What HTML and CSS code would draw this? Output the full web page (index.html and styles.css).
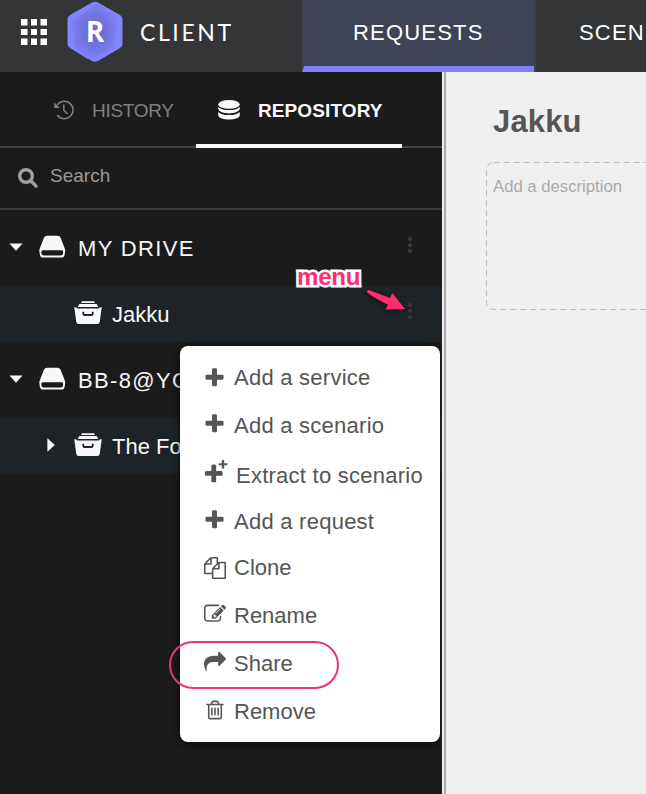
FILE: index.html
```html
<!DOCTYPE html>
<html lang="en">
<head>
<meta charset="utf-8">
<title>Client</title>
<link rel="stylesheet" href="styles.css">
</head>
<body>
<svg class="defs" aria-hidden="true">
  <symbol id="plus" viewBox="0 0 1792 1792"><path d="M1600 736v192q0 40-28 68t-68 28h-416v416q0 40-28 68t-68 28h-192q-40 0-68-28t-28-68v-416h-416q-40 0-68-28t-28-68v-192q0-40 28-68t68-28h416v-416q0-40 28-68t68-28h192q40 0 68 28t28 68v416h416q40 0 68 28t28 68z"/></symbol>
  <symbol id="drive" viewBox="0 0 28 24"><path d="M8.500.3h10.500q2.600 0 3.500 2.400l4.200 10.800q.5 1.200.5 2.500l-.6 4q-.5 3-3.600 3h-18.500q-3.100 0-3.600-3l-.6-4q0-1.300.5-2.500l4.200-10.800q.9-2.400 3.500-2.400z"/><path class="cut" d="M4 15.300h19.500q1.500 0 1.500 1.500v1.200q0 2.800-2.500 2.800h-17.500q-2.500 0-2.500-2.800v-1.200q0-1.500 1.500-1.500z"/></symbol>
  <symbol id="box" viewBox="0 0 28 24"><path d="M8.200.3h11.600l1.300 1.800h-14.200zM5.300 3h17.400l1.500 3h-20.400zM.3 6.200h1.500l1.600 1.200h21.200l1.600-1.200h1.500l-2 14.800q-.3 2-2.300 2h-18.800q-2 0-2.300-2z"/><path class="groove" d="M9.300 10.700v2q0 1.300 1.300 1.300h6.800q1.300 0 1.300-1.300v-2"/></symbol>
</svg>
<header class="topbar">
  <div class="brand">
    <svg class="apps" viewBox="0 0 26 26"><path d="M0 0h6.500v6.500H0zM10 0h6v6.500h-6zM19.500 0H26v6.500h-6.500zM0 10h6.500v6H0zM10 10h6v6h-6zM19.500 10H26v6h-6.500zM0 19.500h6.500V26H0zM10 19.500h6V26h-6zM19.500 19.500H26V26h-6.500z"/></svg>
    <div class="logo">
      <svg viewBox="0 0 56 62">
        <defs><radialGradient id="core"><stop offset="0" stop-color="#6668c8"/><stop offset=".55" stop-color="#7073dc"/><stop offset="1" stop-color="#7e80f8"/></radialGradient></defs>
        <path fill="#8285ff" d="M25 1.500Q28 0 31 1.500L53 14Q55.500 15.500 55.500 18V43Q55.500 45.500 53 47L31 60Q28 61.500 25 60L3 47Q.5 45.500 .5 43V18Q.5 15.500 3 14Z"/>
        <path fill="url(#core)" d="M29 3.500Q31 2 33 3.500L49 16Q51 18 50.500 20L47 45Q46.500 48 44 49.500L24 57.500Q21 58.500 19 57L10 51Q7.500 49.500 7.500 46.500L4.500 25Q4 21 7 18.500Z"/>
      </svg>
      <span class="logo-letter">R</span>
    </div>
    <span class="brand-name">CLIENT</span>
  </div>
  <nav class="topnav"><a class="top-tab active">REQUESTS</a><a class="top-tab">SCEN</a></nav>
</header>
<div class="workspace">
  <aside class="sidebar">
    <div class="side-tabs">
      <div class="side-tab history">
        <svg viewBox="0 0 20 20" width="20" height="20"><path class="line" d="M3.300 4.900A8.700 8.700 0 1 1 3.200 15M9.800 4.500V10.200L13.700 14"/><path class="solid" d="M.2 2.400V8.100H6z"/></svg>
        <span>HISTORY</span>
      </div>
      <div class="side-tab repository">
        <svg viewBox="0 0 22 20" width="22" height="20"><ellipse cx="11" cy="4.400" rx="10.800" ry="4.300"/><path d="M.2 7Q3 10.100 11 10.100T21.800 7V8.800C20.500 15 1.500 15 .2 8.800zM.2 12Q3 15.100 11 15.100T21.800 12V15.200C20.500 21 1.500 21 .2 15.200z"/></svg>
        <span>REPOSITORY</span>
      </div>
    </div>
    <div class="search">
      <svg viewBox="0 0 20 20" width="20" height="20"><circle cx="8" cy="8" r="6.300"/><path d="M13 13l5 5"/></svg>
      <span>Search</span>
    </div>
    <div class="row group">
      <svg class="caret" viewBox="0 0 14 8"><path d="M.4.500h13.200L7 7.700z"/></svg>
      <svg class="glyph"><use href="#drive"/></svg>
      <span class="label">MY DRIVE</span>
      <svg class="dots" viewBox="0 0 4 16"><circle cx="2" cy="2" r="2"/><circle cx="2" cy="8" r="2"/><circle cx="2" cy="14" r="2"/></svg>
    </div>
    <div class="row item">
      <svg class="glyph"><use href="#box"/></svg>
      <span class="label">Jakku</span>
      <span class="dots-button"><svg class="dots" viewBox="0 0 4 16"><circle cx="2" cy="2" r="2"/><circle cx="2" cy="8" r="2"/><circle cx="2" cy="14" r="2"/></svg></span>
    </div>
    <div class="row group">
      <svg class="caret" viewBox="0 0 14 8"><path d="M.4.500h13.200L7 7.700z"/></svg>
      <svg class="glyph"><use href="#drive"/></svg>
      <span class="label">BB-8@YO</span>
    </div>
    <div class="row item nested">
      <svg class="caret-right" viewBox="0 0 8 14"><path d="M.4.300L7.800 7 .4 13.700z"/></svg>
      <svg class="glyph"><use href="#box"/></svg>
      <span class="label">The Fo</span>
    </div>
  </aside>
  <main class="content">
    <h1>Jakku</h1>
    <div class="description">
      <svg class="dashes" width="300" height="148"><rect x=".5" y=".5" width="298" height="147" rx="7"/></svg>
      <span>Add a description</span>
    </div>
  </main>
</div>
<ul class="menu">
  <li><svg class="icon" viewBox="0 0 24 24"><use href="#plus" x="0" y=".500" width="23" height="23"/></svg><span>Add a service</span></li>
  <li><svg class="icon raised" viewBox="0 0 24 24"><use href="#plus" x="0" y=".500" width="23" height="23"/></svg><span>Add a scenario</span></li>
  <li class="extract"><svg class="icon raised wide" viewBox="0 0 26 24"><use href="#plus" x="-.500" y="1" width="22.500" height="22.500"/><path d="M19.300-2h1.400q.5 0 .5.500v2.700h2.700q.5 0 .5.500v1.100q0 .5-.5.5h-2.700v2.700q0 .5-.5.500h-1.400q-.5 0-.5-.5v-2.700h-2.700q-.5 0-.5-.5v-1.100q0-.5.500-.5h2.700v-2.700q0-.5.500-.5z"/></svg><span>Extract to scenario</span></li>
  <li><svg class="icon raised" viewBox="0 0 24 24"><use href="#plus" x="0" y=".500" width="23" height="23"/></svg><span>Add a request</span></li>
  <li class="clone short"><svg class="icon" viewBox="-80 -80 1952 1952"><path d="M1696 384q40 0 68 28t28 68v1216q0 40-28 68t-68 28h-960q-40 0-68-28t-28-68v-288h-544q-40 0-68-28t-28-68v-672q0-40 20-88t48-76l408-408q28-28 76-48t88-20h416q40 0 68 28t28 68v328q68-40 128-40h416zm-544 213l-299 299h299v-299zm-640-384l-299 299h299v-299zm196 647l316-316v-416h-384v416q0 40-28 68t-68 28h-416v640h512v-256q0-40 20-88t48-76zm956 804v-1152h-384v416q0 40-28 68t-68 28h-416v640h896z"/></svg><span>Clone</span></li>
  <li class="short"><svg class="icon raised" viewBox="-80 -80 1952 1952"><path d="M888 1184l116-116-152-152-116 116v56h96v96h56zm440-720q-16-16-33 1l-350 350q-17 17-1 33t33-1l350-350q17-17 1-33zm80 594v190q0 119-84.500 203.500t-203.500 84.500h-832q-119 0-203.500-84.500t-84.500-203.500v-832q0-119 84.500-203.500t203.500-84.500h832q63 0 117 25 15 7 18 23 3 17-9 29l-49 49q-14 14-32 8-23-6-45-6h-832q-66 0-113 47t-47 113v832q0 66 47 113t113 47h832q66 0 113-47t47-113v-126q0-13 9-22l64-64q15-15 35-7t20 29zm-96-738l288 288-672 672h-288v-288zm444 132l-92 92-288-288 92-92q28-28 68-28t68 28l152 152q28 28 28 68t-28 68z"/></svg><span>Rename</span></li>
  <li class="short"><svg class="icon raised" viewBox="-80 -80 1952 1952"><path d="M1792 640q0 26-19 45l-512 512q-19 19-45 19t-45-19-19-45v-256h-224q-98 0-175.500 6t-154 21.500-133 42.500-105.500 69.500-80 101-48.500 138.500-17.500 181q0 55 5 123 0 6 2.500 23.500t2.500 26.500q0 15-8.500 25t-23.500 10q-16 0-28-17-7-9-13-22t-13.500-30-10.500-24q-127-285-127-451 0-199 53-333 162-403 875-403h224v-256q0-26 19-45t45-19 45 19l512 512q19 19 19 45z"/></svg><span>Share</span></li>
  <li class="short"><svg class="icon raised" viewBox="-80 -80 1952 1952"><path d="M704 736v576q0 14-9 23t-23 9h-64q-14 0-23-9t-9-23v-576q0-14 9-23t23-9h64q14 0 23 9t9 23zm256 0v576q0 14-9 23t-23 9h-64q-14 0-23-9t-9-23v-576q0-14 9-23t23-9h64q14 0 23 9t9 23zm256 0v576q0 14-9 23t-23 9h-64q-14 0-23-9t-9-23v-576q0-14 9-23t23-9h64q14 0 23 9t9 23zm128 724v-948h-896v948q0 22 7 40.500t14.500 27 10.500 8.500h832q3 0 10.500-8.500t14.500-27 7-40.500zm-672-1076h448l-48-117q-7-9-17-11h-317q-10 2-17 11zm928 32v64q0 14-9 23t-23 9h-96v948q0 83-47 143.500t-113 60.500h-832q-66 0-113-58.500t-47-141.500v-952h-96q-14 0-23-9t-9-23v-64q0-14 9-23t23-9h309l70-167q15-37 54-63t79-26h320q40 0 79 26t54 63l70 167h309q14 0 23 9t9 23z"/></svg><span>Remove</span></li>
</ul>
<span class="callout">menu</span>
<svg class="arrow" viewBox="0 0 42 24"><path d="M2.300 1.700Q3 .6 4.500 1.200L25 9 27.300 4 40 19.900 20.500 20.500 23 15.700Q11 10 3 4.200 1.800 3.200 2.300 1.700z"/></svg>
<div class="ring"></div>
</body>
</html>
```
FILE: styles.css
```css
* { box-sizing: border-box; }
body { margin: 0; width: 646px; height: 794px; overflow: hidden; position: relative; background: #efefef; font-family: "Liberation Sans", Arial, sans-serif; color: #555; }
svg { display: block; flex: none; overflow: visible; }
.defs { position: absolute; width: 0; height: 0; }

.topbar { display: flex; height: 72px; overflow: hidden; background: #343537; color: #fff; }
.brand { display: flex; width: 302px; flex: none; height: 64px; align-items: center; padding-left: 21px; }
.apps { width: 26px; height: 26px; fill: #fff; }
.logo { position: relative; width: 56px; height: 62px; margin: 0 17px 0 20px; display: flex; align-items: center; justify-content: center; }
.logo svg { position: absolute; left: 0; top: 0; width: 56px; height: 62px; }
.logo-letter { position: relative; font: 700 28px/34px "Open Sans", sans-serif; padding-bottom: 2px; }
.brand-name { font: 400 23px/30px Lato, sans-serif; letter-spacing: 2.600px; }
.topnav { display: flex; flex: none; }
.top-tab { height: 72px; font-size: 22px; line-height: 66px; letter-spacing: 1.200px; padding-left: 43px; border-left: 2px solid #3f4144; }
.top-tab.active { width: 232px; padding-left: 49px; background: #3f4357; border-bottom: 6px solid #8080ff; }

.workspace { display: flex; height: 722px; }
.sidebar { width: 442px; flex: none; background: #1b1b1b; }
.side-tabs { display: flex; height: 76px; box-shadow: inset 0 -2px #444; font-size: 19px; }
.side-tab { display: flex; align-items: center; height: 76px; }
.side-tab span { padding-top: 2px; }
.history { width: 196px; padding-left: 54px; gap: 18px; color: #808080; letter-spacing: -.3px; }
.history .line { fill: none; stroke: #808080; stroke-width: 1.500; }
.history .solid { fill: #808080; }
.repository { width: 206px; padding-left: 22px; gap: 18px; border-bottom: 4px solid #f5f5fa; color: #f8f8fa; fill: #f8f8fa; font-weight: 700; padding-top: 4px; letter-spacing: .1px; }
.search { display: flex; align-items: center; gap: 12px; height: 62px; padding: 0 0 4px 18px; border-bottom: 2px solid #2f3a42; color: #999; font-size: 19px; }
.search svg { fill: none; stroke: #a0a0a0; stroke-width: 3.400; stroke-linecap: round; margin-top: 4px; }

.row { display: flex; align-items: center; padding-top: 2px; color: #f8f8fa; fill: #f8f8fa; font-size: 22px; white-space: nowrap; }
.group { height: 76px; padding-left: 9px; letter-spacing: 1.350px; }
.item { height: 56px; padding-left: 74px; background: #1d2326; }
.nested { padding-left: 47px; }
.caret { width: 14px; height: 8px; margin: 0 16px 4px 0; }
.caret-right { width: 8px; height: 14px; margin: 0 19px 4px 0; }
.glyph { width: 28px; height: 24px; margin: 0 12px 4px 0; }
.group .glyph { width: 27px; }
.item .glyph { margin-right: 10px; }
.cut { fill: #1b1b1b; }
.groove { fill: none; stroke: #1d2326; stroke-width: 1.800; }
.label { flex: 1; }
.dots { width: 4px; height: 16px; fill: #3a3b3b; }
.group .dots { margin: 0 30px 9px 0; }
.dots-button { display: flex; align-items: center; justify-content: center; width: 46px; height: 38px; margin-right: 9px; padding-bottom: 9px; border-radius: 6px; border: 1px solid #1b2023; }

.content { flex: 1; min-width: 0; overflow: hidden; margin-left: 2px; border-left: 2px solid #aaa; padding: 32px 0 0 40px; }
h1 { margin: 0 0 22px 7px; font-size: 31px; line-height: 36px; letter-spacing: .15px; }
.description { position: relative; width: 300px; height: 148px; padding: 15px 7px; font-size: 16.700px; line-height: 20px; color: #aaa; }
.dashes { position: absolute; left: 0; top: 0; fill: none; stroke: #bbb; stroke-dasharray: 6 4; }

.menu { position: absolute; left: 180px; top: 346px; width: 260px; height: 396px; margin: 0; padding: 8px 0 0 23px; list-style: none; border-radius: 8px; background: #fff; box-shadow: 0 2px 10px rgba(0,0,0,.7); clip-path: inset(-12px 0 -16px -12px); }
.menu li { display: flex; align-items: center; gap: 7px; height: 48px; font-size: 22px; letter-spacing: .25px; white-space: nowrap; }
.menu .extract { padding-top: 4px; }
.menu .clone { margin-top: -2px; }
.menu .short { letter-spacing: 0; }
.icon { width: 24px; height: 24px; fill: #555; }
.icon.wide { width: 26px; }
.icon.raised { margin-bottom: 4px; }

.callout { position: absolute; left: 297px; top: 263px; font-size: 24px; line-height: 28px; font-weight: 700; color: #ff2d6f; -webkit-text-stroke: 5px #fff; paint-order: stroke fill; letter-spacing: -.2px; }
.arrow { position: absolute; left: 365px; top: 289px; width: 42px; height: 24px; fill: #ff2d6f; filter: drop-shadow(0 1px 2px rgba(0,0,0,.6)); }
.ring { position: absolute; left: 169px; top: 641px; width: 170px; height: 48px; border: 2px solid #f42f6e; border-radius: 24px; }
```
